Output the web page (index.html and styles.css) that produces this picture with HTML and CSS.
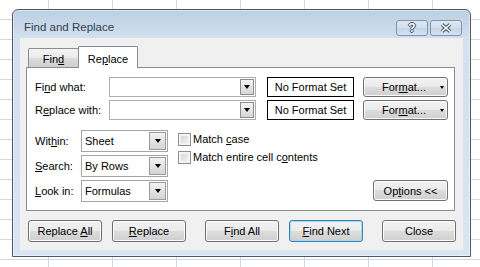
FILE: index.html
```html
<!DOCTYPE html>
<html lang="en">
	<head>
		<title>Find and Replace</title>
		<meta name="viewport" content="width=device-width, initial-scale=1">
		<link rel="stylesheet" href="styles.css">
	</head>
	<body>
		<div class="dialog">
			<div class="titlebar">
				<span class="title">Find and Replace</span>
				<div class="caption-btns">
					<span class="cap-btn help">?</span>
					<span class="cap-btn">
						<svg width="14" height="10" viewBox="0 0 14 10">
							<path d="M3 1.5 L11 8.5 M11 1.5 L3 8.5" stroke="#3d4b5c" stroke-width="3.6" fill="none"/>
							<path d="M3 1.5 L11 8.5 M11 1.5 L3 8.5" stroke="#fff" stroke-width="1.6" fill="none"/>
						</svg>
					</span>
				</div>
			</div>
			<div class="client">
				<div class="tabs">
					<div class="tab"><span>Fin<u>d</u></span></div>
					<div class="tab active"><span>Re<u>p</u>lace</span></div>
				</div>
				<div class="panel">
					<div class="row">
						<span class="row-label">Fi<u>n</u>d what:</span>
						<div class="combo"><span class="drop"><span class="tri"></span></span></div>
						<div class="fmt-box">No Format Set</div>
						<div class="btn fmt-btn"><span>For<u>m</u>at...</span><span class="caret"></span></div>
					</div>
					<div class="row">
						<span class="row-label">R<u>e</u>place with:</span>
						<div class="combo"><span class="drop"><span class="tri"></span></span></div>
						<div class="fmt-box">No Format Set</div>
						<div class="btn fmt-btn"><span>For<u>m</u>at...</span><span class="caret"></span></div>
					</div>
					<div class="lower">
						<div class="fields">
							<span>Wit<u>h</u>in:</span>
							<div class="select"><span>Sheet</span><span class="sel-drop"><span class="tri"></span></span></div>
							<span><u>S</u>earch:</span>
							<div class="select"><span>By Rows</span><span class="sel-drop"><span class="tri"></span></span></div>
							<span><u>L</u>ook in:</span>
							<div class="select"><span>Formulas</span><span class="sel-drop"><span class="tri"></span></span></div>
						</div>
						<div class="checks">
							<div class="check"><span class="box"></span><span>Match <u>c</u>ase</span></div>
							<div class="check"><span class="box"></span><span>Match entire cell c<u>o</u>ntents</span></div>
						</div>
						<div class="btn options"><span>Op<u>t</u>ions &lt;&lt;</span></div>
					</div>
				</div>
				<div class="actions">
					<div class="btn action"><span>Replace <u>A</u>ll</span></div>
					<div class="btn action gap-s"><span><u>R</u>eplace</span></div>
					<div class="btn action gap-l"><span>F<u>i</u>nd All</span></div>
					<div class="btn action gap-s default"><span><u>F</u>ind Next</span></div>
					<div class="btn action gap-l"><span>Close</span></div>
				</div>
			</div>
		</div>
	</body>
</html>
```
FILE: styles.css
```css
* {
	box-sizing: border-box;
}

html {
	height: 100%;
	background-color: #fff;
	background-image:
		linear-gradient(to right, #d0d7e5 1px, transparent 1px),
		linear-gradient(to bottom, #d0d7e5 1px, transparent 1px);
	background-size: 64px 20px;
	background-position: 48px 19px;
}

body {
	margin: 0;
	padding: 9px 0 0 12px;
	font-family: "Liberation Sans", Arial, sans-serif;
	font-size: 11px;
	color: #000;
}

u {
	text-underline-offset: 1px;
}

.dialog {
	width: 459px;
	height: 248px;
	border: 1px solid #4f5966;
	border-radius: 6px 6px 0 0;
	padding: 0 7px 6px 7px;
	background: linear-gradient(#bccfe3, #d2e0ef 28px, #d9e5f2);
	box-shadow: inset 0 0 0 1px rgba(255, 255, 255, 0.45);
}

.titlebar {
	height: 28px;
	display: flex;
	align-items: flex-start;
	padding-left: 4px;
}

.title {
	margin-top: 10px;
	line-height: 15px;
	font-size: 11.5px;
	color: #344050;
}

.caption-btns {
	margin-left: auto;
	margin-top: 10px;
	margin-right: 1px;
	display: flex;
	gap: 2px;
}

.cap-btn {
	width: 32px;
	height: 16px;
	border: 1px solid #8194aa;
	border-radius: 3px;
	background: linear-gradient(rgba(255, 255, 255, 0.45), rgba(255, 255, 255, 0.15) 50%, rgba(180, 200, 222, 0.3) 50%, rgba(220, 232, 244, 0.5));
	display: flex;
	align-items: center;
	justify-content: center;
}

.help {
	font-weight: bold;
	font-size: 12px;
	line-height: 14px;
	color: #fff;
	text-shadow: 1px 0 #3d4b5c, -1px 0 #3d4b5c, 0 1px #3d4b5c, 0 -1px #3d4b5c;
}

.client {
	height: 212px;
	background-color: #f0f0f0;
}

.tabs {
	height: 29px;
	display: flex;
	align-items: flex-end;
	padding-left: 8px;
}

.tab {
	width: 51px;
	height: 19px;
	border: 1px solid #898c95;
	border-bottom: none;
	border-radius: 2px 2px 0 0;
	background: linear-gradient(#f3f3f3, #ebebeb 50%, #dcdcdc 50%, #cfcfcf);
	display: flex;
	align-items: center;
	justify-content: center;
	padding-top: 2px;
}

.tab.active {
	width: 60px;
	height: 22px;
	margin-left: -1px;
	margin-bottom: -1px;
	background: #fff;
	position: relative;
	z-index: 1;
}

.panel {
	margin-left: 6px;
	width: 429px;
	height: 144px;
	border: 1px solid #898c95;
	background-color: #fff;
	padding: 9px 6px 0 8px;
}

.row {
	display: flex;
	align-items: center;
	height: 20px;
}

.row + .row {
	margin-top: 3px;
}

.row-label {
	width: 74px;
}

.combo {
	width: 147px;
	height: 20px;
	border: 1px solid #abadb3;
	padding: 1px;
	display: flex;
	justify-content: flex-end;
	margin-right: 11px;
}

.drop {
	width: 14px;
	height: 16px;
	border: 1px solid #8c8c8c;
	background: linear-gradient(#f4f4f4, #d6d6d6);
	display: flex;
	align-items: center;
	justify-content: center;
}

.tri {
	width: 0;
	height: 0;
	border-top: 4px solid #000;
	border-left: 3.5px solid transparent;
	border-right: 3.5px solid transparent;
}

.fmt-box {
	width: 87px;
	height: 20px;
	border: 1px solid #000;
	display: flex;
	align-items: center;
	justify-content: center;
}

.btn {
	border: 1px solid #707070;
	border-radius: 3px;
	background: linear-gradient(#f2f2f2, #ebebeb 50%, #dddddd 50%, #cfcfcf);
	box-shadow: inset 0 0 0 1px #fbfbfb;
	display: flex;
	align-items: center;
	justify-content: center;
}

.fmt-btn {
	width: 85px;
	height: 20px;
	margin-left: 9px;
	justify-content: flex-start;
	padding-left: 18px;
}

.caret {
	margin-left: auto;
	margin-right: 3px;
	width: 0;
	height: 0;
	border-top: 3px solid #000;
	border-left: 2.5px solid transparent;
	border-right: 2.5px solid transparent;
}

.lower {
	display: flex;
	margin-top: 10px;
}

.fields {
	display: grid;
	grid-template-columns: 46px 87px;
	row-gap: 3px;
	align-items: center;
}

.select {
	height: 22px;
	border: 1px solid #a5a5a5;
	padding: 1px 1px 1px 3px;
	display: flex;
	align-items: center;
	justify-content: space-between;
}

.sel-drop {
	width: 17px;
	height: 18px;
	border: 1px solid #9a9a9a;
	background: linear-gradient(#f2f2f2, #d4d4d4);
	display: flex;
	align-items: center;
	justify-content: center;
}

.checks {
	margin-left: 10px;
}

.check {
	height: 18px;
	line-height: 18px;
	display: flex;
	align-items: flex-start;
}

.box {
	width: 13px;
	height: 13px;
	margin-top: 3px;
	margin-right: 2px;
	border: 1px solid #8e8f8f;
	background: linear-gradient(135deg, #cdd0d4, #f7f7f7);
	box-shadow: inset 0 0 0 2px #f4f4f4;
}

.options {
	width: 75px;
	height: 21px;
	margin-left: auto;
	margin-bottom: 1px;
	align-self: flex-end;
}

.actions {
	display: flex;
	margin-top: 9px;
	padding-left: 8px;
}

.action {
	width: 74px;
	height: 22px;
}

.gap-s {
	margin-left: 10px;
}

.gap-l {
	margin-left: 19px;
}

.default {
	border-color: #3c7fb1;
	box-shadow: inset 0 0 0 1px #9fdcf6;
}
```
